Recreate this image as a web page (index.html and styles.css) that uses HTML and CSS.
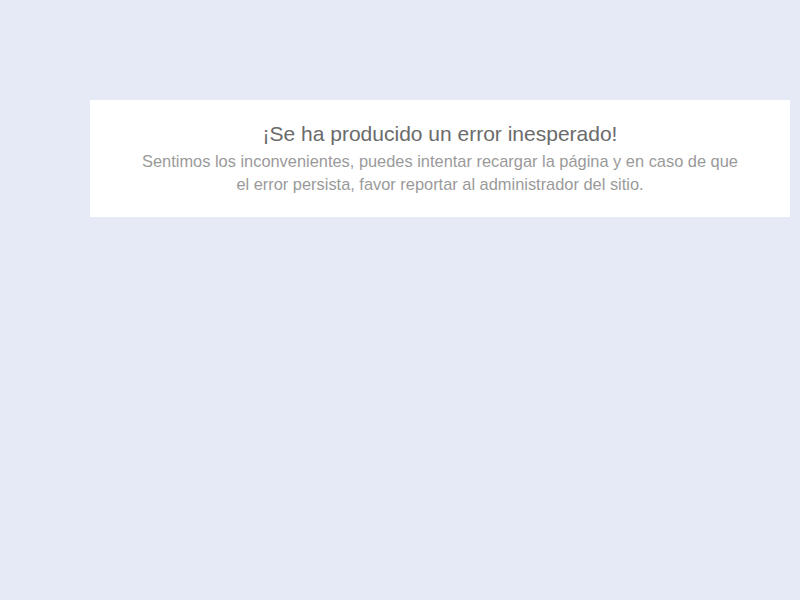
FILE: index.html
```html
<!DOCTYPE html>
<html lang="es">
<head>
<meta charset="utf-8">
<title>Error</title>
<link rel="stylesheet" href="styles.css">
</head>
<body>
<main class="page">
  <section class="error-card">
    <h1 class="error-title">¡Se ha producido un error inesperado!</h1>
    <p class="error-text">Sentimos los inconvenientes, puedes intentar recargar la página y en caso de que el error persista, favor reportar al administrador del sitio.</p>
  </section>
</main>
</body>
</html>
```

FILE: styles.css
```css
html, body {
  margin: 0;
  padding: 0;
  background: #e6eaf6;
  font-family: "Liberation Sans", Arial, sans-serif;
}
.page {
  padding: 100px 10px 0 90px;
}
.error-card {
  background: #ffffff;
  padding: 22px 50px 21px;
  text-align: center;
}
.error-title {
  margin: 0;
  font-size: 21px;
  line-height: 24px;
  font-weight: normal;
  color: #6b6b6b;
}
.error-text {
  margin: 4px 0 0;
  font-size: 16.4px;
  line-height: 23px;
  color: #9a9a9a;
}
```
